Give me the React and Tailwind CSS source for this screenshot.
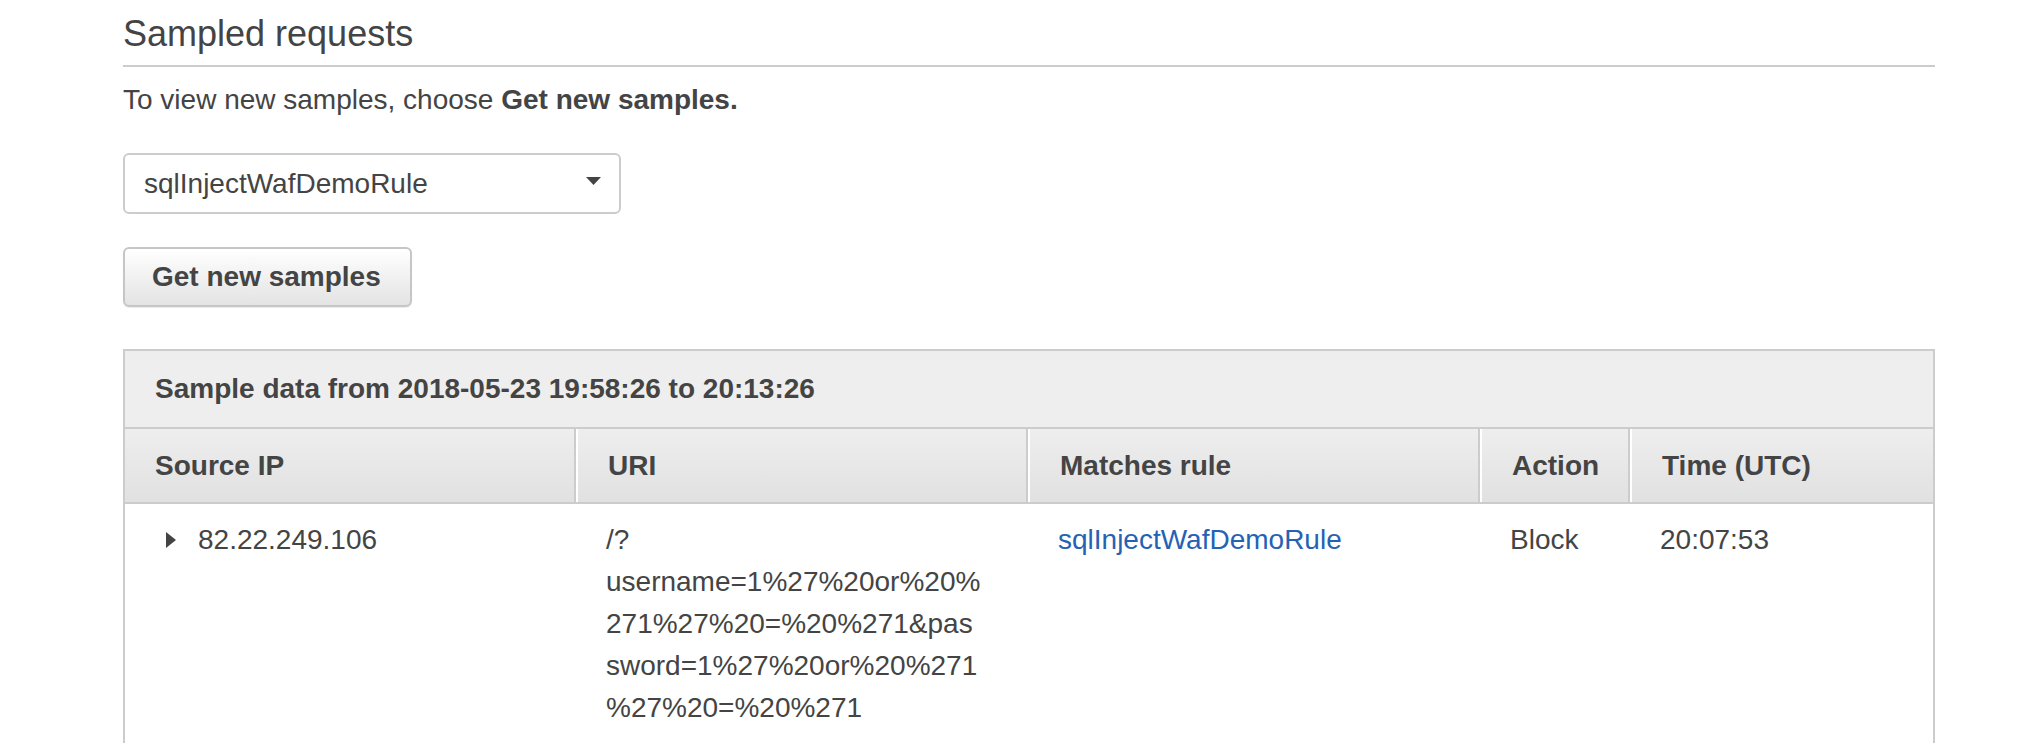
import React from 'react';

const uriLines = [
  '/?',
  'username=1%27%20or%20%',
  '271%27%20=%20%271&pas',
  'sword=1%27%20or%20%271',
  '%27%20=%20%271',
];

const columns = ['Source IP', 'URI', 'Matches rule', 'Action', 'Time (UTC)'];

export default function App() {
  return (
    <div className="h-[743px] overflow-hidden bg-white text-[#444] font-['Liberation_Sans',Arial,sans-serif]">
      <div className="ml-[123px] w-[1812px] pt-[12px]">
        {/* Section title */}
        <h2 className="text-[36px] leading-[43px] font-normal">Sampled requests</h2>
        <div className="mt-[10px] h-[2px] bg-[#cccccc]" />

        <p className="mt-[12px] text-[28px] leading-[42px]">
          To view new samples, choose <span className="font-bold">Get new samples.</span>
        </p>

        {/* Rule selector */}
        <div className="mt-[32px] flex h-[61px] w-[498px] items-center justify-between rounded-[6px] border-2 border-[#cccccc] bg-white pl-[19px] pr-[18px]">
          <span className="text-[28px] leading-none">sqlInjectWafDemoRule</span>
          <svg width="15" height="8" viewBox="0 0 15 8" className="mb-[6px]">
            <polygon points="0,0 15,0 7.5,8" fill="#444" />
          </svg>
        </div>

        {/* Button */}
        <button className="mt-[33px] flex h-[60px] w-[289px] items-center rounded-[6px] border-2 border-[#c6c6c6] bg-gradient-to-b from-white to-[#e3e3e3] pl-[27px] text-[28px] font-bold text-[#444] shadow-[0_1px_1px_rgba(0,0,0,0.08)]">
          Get new samples
        </button>

        {/* Sample table */}
        <div className="mt-[42px] border-x-2 border-t-2 border-[#cccccc]">
          <div className="flex h-[76px] items-center bg-[#eeeeee] pl-[30px] text-[28px] font-bold">
            Sample data from 2018-05-23 19:58:26 to 20:13:26
          </div>
          <div className="grid h-[77px] grid-cols-[451px_452px_452px_150px_1fr] border-y-2 border-[#cccccc] bg-gradient-to-b from-[#eeeeee] to-[#e1e1e1] text-[28px] font-bold">
            {columns.map((c, i) => (
              <div
                key={c}
                className={
                  i === 0
                    ? 'flex items-center border-r-2 border-[#cccccc] pl-[30px]'
                    : i === columns.length - 1
                    ? 'flex items-center border-l-2 border-white pl-[30px]'
                    : 'flex items-center border-l-2 border-l-white border-r-2 border-r-[#cccccc] pl-[30px]'
                }
              >
                {c}
              </div>
            ))}
          </div>
          <div className="grid grid-cols-[451px_452px_452px_150px_1fr] pt-[15px] pb-[30px] text-[28px] leading-[42px]">
            <div className="flex items-center pl-[41px] self-start h-[42px]">
              <svg width="10" height="16" viewBox="0 0 10 16" className="mr-[22px]">
                <polygon points="0,0 10,8 0,16" fill="#444" />
              </svg>
              <span>82.22.249.106</span>
            </div>
            <div className="pl-[30px]">
              {uriLines.map((l) => (
                <div key={l} className="whitespace-nowrap">{l}</div>
              ))}
            </div>
            <div className="pl-[30px]">
              <a href="#" className="text-[#2562b4]">sqlInjectWafDemoRule</a>
            </div>
            <div className="pl-[30px]">Block</div>
            <div className="pl-[30px]">20:07:53</div>
          </div>
        </div>
      </div>
    </div>
  );
}
